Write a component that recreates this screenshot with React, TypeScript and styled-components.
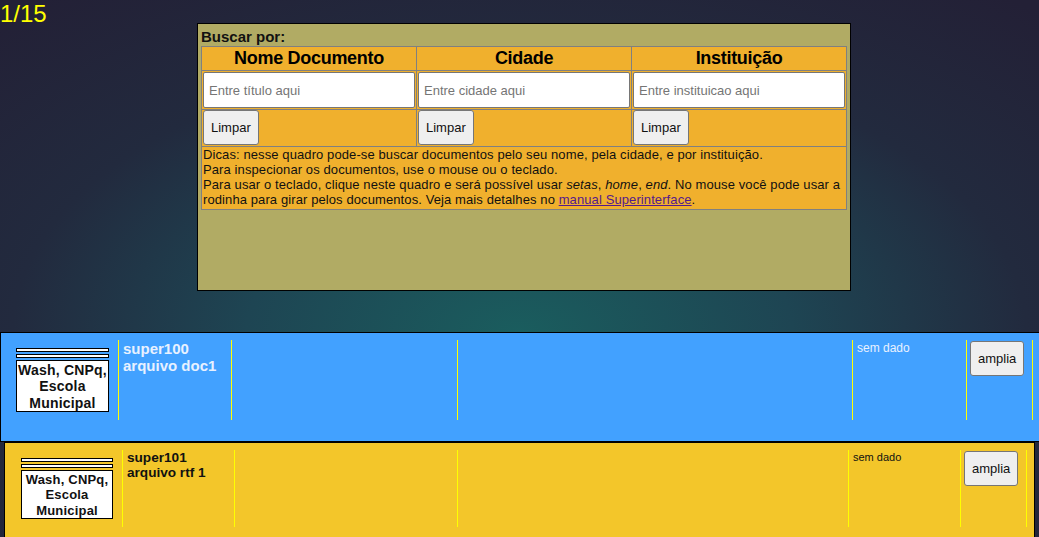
import React from "react";
import styled, { createGlobalStyle } from "styled-components";

const Global = createGlobalStyle`
  html, body {
    margin: 0;
    padding: 0;
    overflow: hidden;
    height: 100%;
  }
  html {
    background: radial-gradient(ellipse 75% 80% at 50% 62%, #1a5d5e 0%, #1e4553 35%, #222a3e 65%, #232036 100%);
  }
  body {
    font-family: "Liberation Sans", Arial, sans-serif;
  }
`;

const Page = styled.div`
  width: 1039px;
  height: 537px;
`;

const Counter = styled.div`
  height: 23px;
  font-size: 24px;
  line-height: normal;
  color: #ffff00;
  white-space: nowrap;
`;

const SearchPanel = styled.section`
  margin-left: 197px;
  width: 654px;
  height: 268px;
  box-sizing: border-box;
  border: 1px solid #000;
  background: #b1ab64;
  padding: 4px 3px;
`;

const PanelTitle = styled.div`
  font-size: 15px;
  font-weight: bold;
  color: #111;
  line-height: 18px;
`;

const SearchTable = styled.table`
  width: 646px;
  border-collapse: collapse;
  table-layout: fixed;
  background: #f0b02d;
`;

const HeadCell = styled.th`
  border: 1px solid #808080;
  padding: 1px;
  font-size: 18px;
  font-weight: bold;
  letter-spacing: -0.3px;
  color: #000;
  text-align: center;
  line-height: normal;
`;

const Cell = styled.td`
  border: 1px solid #808080;
  padding: 1px;
  text-align: left;
  vertical-align: middle;
`;

const TipsCell = styled(Cell)`
  font-size: 13px;
  letter-spacing: 0.1px;
  line-height: 15px;
  padding: 0 1px 2px;
  color: #111;
`;

const SearchInput = styled.input`
  display: block;
  width: 100%;
  height: 36px;
  box-sizing: border-box;
  margin: 0;
  border: 1px solid #767676;
  border-radius: 2px;
  padding: 0 5px;
  font-family: "Liberation Sans", Arial, sans-serif;
  font-size: 13px;
  background: #fff;
  &::placeholder {
    color: #757575;
  }
`;

const PlainButton = styled.button`
  display: block;
  height: 35px;
  box-sizing: border-box;
  margin: 0;
  border: 1px solid #767676;
  border-radius: 3px;
  background: #efefef;
  padding: 0 7px;
  font-family: "Liberation Sans", Arial, sans-serif;
  font-size: 13px;
  color: #111;
`;

const ClearButton = styled(PlainButton)`
  margin-top: -1px;
`;

const ManualLink = styled.a`
  color: #551a8b;
  text-decoration: underline;
`;

type CardLook = {
  left: number;
  width: number;
  height: number;
  padLeft: number;
  cols: number[];
  colHeight: number;
  bg: string;
  color: string;
  titleSize: number;
  labelSize: number;
  noteSize: number;
  stackWidth: number;
};

const frontLook: CardLook = {
  left: 0,
  width: 1045,
  height: 110,
  padLeft: 15,
  cols: [113, 226, 395, 114, 67],
  colHeight: 80,
  bg: "#42a1ff",
  color: "#e8f1ff",
  titleSize: 15,
  labelSize: 14,
  noteSize: 12,
  stackWidth: 93,
};

const backLook: CardLook = {
  left: 4,
  width: 1031,
  height: 120,
  padLeft: 16,
  cols: [112, 223, 391, 112, 67],
  colHeight: 77,
  bg: "#f3c62a",
  color: "#111",
  titleSize: 13.6,
  labelSize: 13,
  noteSize: 11,
  stackWidth: 92,
};

const CardList = styled.div`
  margin-top: 41px;
`;

const Card = styled.article<{ $look: CardLook }>`
  margin-left: ${(p) => p.$look.left}px;
  width: ${(p) => p.$look.width}px;
  height: ${(p) => p.$look.height}px;
  box-sizing: border-box;
  border: 1px solid #000;
  background: ${(p) => p.$look.bg};
  padding: 7px 0 0 ${(p) => p.$look.padLeft}px;
`;

const CardRow = styled.div<{ $h: number }>`
  display: flex;
  height: ${(p) => p.$h}px;
  align-items: stretch;
`;

const Stack = styled.div<{ $w: number }>`
  width: ${(p) => p.$w}px;
  align-self: center;
  margin-right: 9px;
  flex: none;
`;

const StackBar = styled.div`
  height: 4px;
  box-sizing: border-box;
  border: 1px solid #000;
  background: #fff;
  margin-bottom: 2px;
`;

const StackLabel = styled.div<{ $size: number }>`
  border: 1px solid #000;
  background: #fff;
  padding: 1px 0 0;
  text-align: center;
  font-weight: bold;
  font-size: ${(p) => p.$size}px;
  letter-spacing: 0.2px;
  line-height: 1.17;
  color: #111;
`;

const Column = styled.div<{ $w: number; $last?: boolean }>`
  width: ${(p) => p.$w}px;
  flex: none;
  box-sizing: border-box;
  border-left: 1px solid #ffff00;
  border-right: ${(p) => (p.$last ? "1px solid #ffff00" : "none")};
  padding: 0 4px;
`;

const DocTitle = styled.div<{ $size: number; $color: string }>`
  font-size: ${(p) => p.$size}px;
  font-weight: bold;
  line-height: normal;
  color: ${(p) => p.$color};
`;

const Note = styled.div<{ $size: number; $color: string }>`
  font-size: ${(p) => p.$size}px;
  line-height: normal;
  color: ${(p) => p.$color};
  padding-top: 1px;
`;

const ZoomButton = styled(PlainButton)`
  margin-top: 1px;
  margin-left: -1px;
`;

function DocCard({ look, code, file }: { look: CardLook; code: string; file: string }) {
  const [c1, c2, c3, c4, c5] = look.cols;
  return (
    <Card $look={look}>
      <CardRow $h={look.colHeight}>
        <Stack $w={look.stackWidth}>
          <StackBar />
          <StackBar />
          <StackLabel $size={look.labelSize}>
            Wash, CNPq,
            <br />
            Escola
            <br />
            Municipal
          </StackLabel>
        </Stack>
        <Column $w={c1}>
          <DocTitle $size={look.titleSize} $color={look.color}>
            {code}
            <br />
            {file}
          </DocTitle>
        </Column>
        <Column $w={c2} />
        <Column $w={c3} />
        <Column $w={c4}>
          <Note $size={look.noteSize} $color={look.color}>
            sem dado
          </Note>
        </Column>
        <Column $w={c5} $last>
          <ZoomButton>amplia</ZoomButton>
        </Column>
      </CardRow>
    </Card>
  );
}

export default function App() {
  return (
    <Page>
      <Global />
      <Counter>1/15</Counter>
      <SearchPanel>
        <PanelTitle>Buscar por:</PanelTitle>
        <SearchTable>
          <thead>
            <tr>
              <HeadCell>Nome Documento</HeadCell>
              <HeadCell>Cidade</HeadCell>
              <HeadCell>Instituição</HeadCell>
            </tr>
          </thead>
          <tbody>
            <tr>
              <Cell>
                <SearchInput placeholder="Entre título aqui" />
              </Cell>
              <Cell>
                <SearchInput placeholder="Entre cidade aqui" />
              </Cell>
              <Cell>
                <SearchInput placeholder="Entre instituicao aqui" />
              </Cell>
            </tr>
            <tr>
              <Cell>
                <ClearButton>Limpar</ClearButton>
              </Cell>
              <Cell>
                <ClearButton>Limpar</ClearButton>
              </Cell>
              <Cell>
                <ClearButton>Limpar</ClearButton>
              </Cell>
            </tr>
            <tr>
              <TipsCell colSpan={3}>
                Dicas: nesse quadro pode-se buscar documentos pelo seu nome, pela cidade, e por instituição.
                <br />
                Para inspecionar os documentos, use o mouse ou o teclado.
                <br />
                Para usar o teclado, clique neste quadro e será possível usar <i>setas</i>, <i>home</i>,{" "}
                <i>end</i>. No mouse você pode usar a rodinha para girar pelos documentos. Veja mais detalhes no{" "}
                <ManualLink href="#manual">manual Superinterface</ManualLink>.
              </TipsCell>
            </tr>
          </tbody>
        </SearchTable>
      </SearchPanel>
      <CardList>
        <DocCard look={frontLook} code="super100" file="arquivo doc1" />
        <DocCard look={backLook} code="super101" file="arquivo rtf 1" />
      </CardList>
    </Page>
  );
}
